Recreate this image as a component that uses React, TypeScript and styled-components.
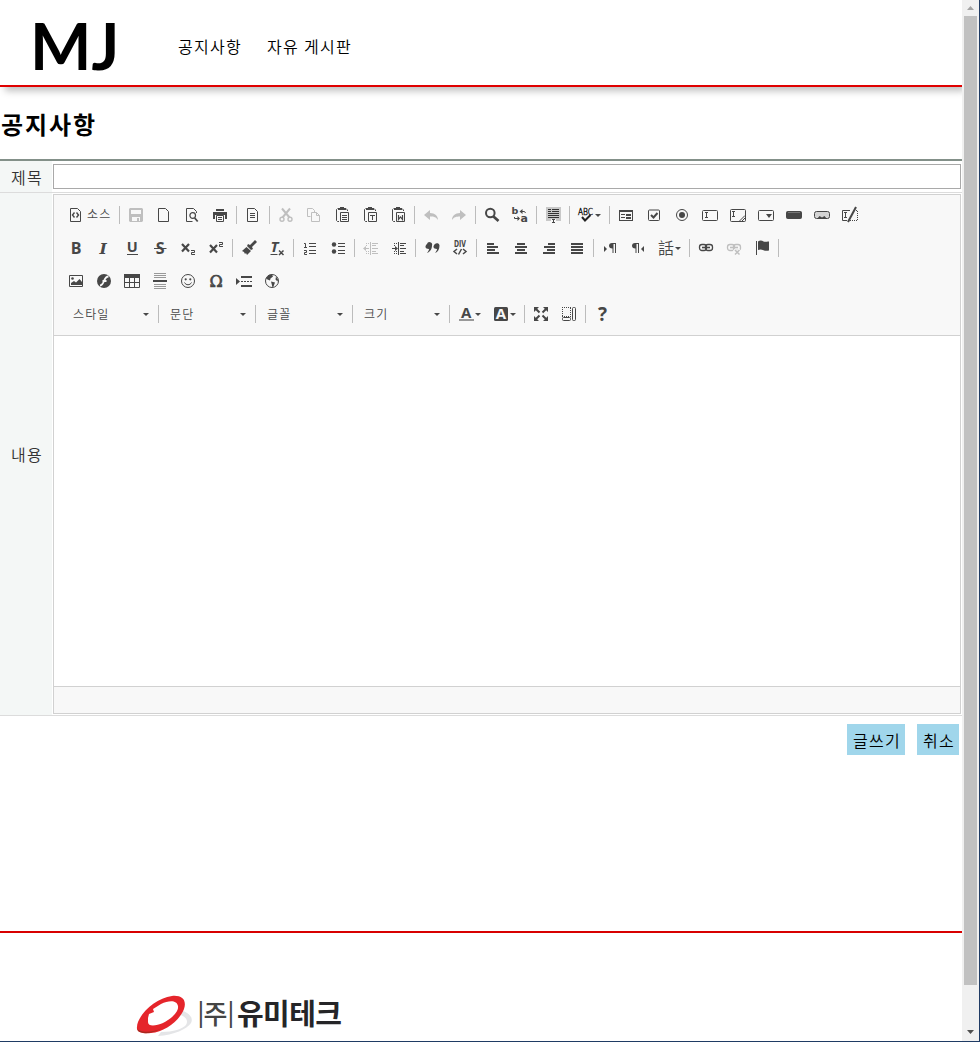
import React from 'react';
import styled, { createGlobalStyle } from 'styled-components';

const INK = '#474747';
const MUTED = '#bfbfbf';

const GlobalStyle = createGlobalStyle`
  * { box-sizing: border-box; }
  body {
    margin: 0;
    background: #fff;
    color: #000;
    font-family: "Noto Sans CJK KR", sans-serif;
    font-size: 16px;
    font-weight: 350;
    overflow: hidden;
  }
`;

const Window = styled.div`
  display: flex;
  width: 980px;
  height: 1042px;
  overflow: hidden;
  border-right: 1px solid #1f3b64;
  border-bottom: 1px solid #1f3b64;
`;

const Page = styled.div`
  width: 962px;
  flex: none;
  overflow: hidden;
`;

const Header = styled.header`
  display: flex;
  align-items: center;
  height: 87px;
  padding: 0 0 0 30px;
  border-bottom: 2px solid #e00000;
  box-shadow: 4px 5px 7px -1px rgba(0, 0, 0, 0.25);
`;

const Brand = styled.div`
  width: 148px;
  font-family: Lato, sans-serif;
  font-size: 65px;
  font-weight: 700;
  line-height: 80px;
  padding-top: 4px;
`;

const Nav = styled.nav`
  display: flex;
  gap: 25px;
  padding-top: 6px;
`;

const NavLink = styled.a`
  line-height: 24px;
  letter-spacing: 1.3px;
`;

const Title = styled.h2`
  margin: 0;
  height: 72px;
  padding: 19px 0 0 1px;
  font-size: 24px;
  font-weight: 700;
  line-height: 36px;
  letter-spacing: 1.9px;
`;

const Form = styled.div`
  border-top: 2px solid #839089;
`;

const FormRow = styled.div<{ $height: number }>`
  display: grid;
  grid-template-columns: 52px 1fr;
  height: ${(p) => p.$height}px;
  border-bottom: 1px solid #dcdcdc;
`;

const Label = styled.label`
  display: flex;
  align-items: center;
  padding: 0 0 0 11px;
  background: #f4f7f6;
  color: #333;
  letter-spacing: 1.3px;
`;

const TitleInput = styled.input`
  height: 25px;
  margin: 3px 1px;
  padding: 1px 4px;
  border: 1px solid #a9a9a9;
  outline: none;
`;

const Editor = styled.div`
  display: flex;
  flex-direction: column;
  margin: 1px;
  border: 1px solid #d1d1d1;
`;

const Toolbar = styled.div`
  height: 141px;
  padding: 4px 8px;
  background: #f8f8f8;
  border-bottom: 1px solid #d1d1d1;
`;

const ToolRow = styled.div`
  display: flex;
  height: 33px;
  padding-top: 7px;
`;

const Tool = styled.span<{ $width?: number }>`
  display: flex;
  width: ${(p) => p.$width ?? 28}px;
  height: 18px;
  padding: 1px 0 0 6px;
  flex: none;
`;

const ToolText = styled.span`
  margin-left: 3px;
  color: #484848;
  font-size: 12px;
  font-weight: 350;
  line-height: 14px;
  letter-spacing: 1.1px;
  white-space: nowrap;
`;

const Divider = styled.span`
  width: 1px;
  height: 18px;
  margin: 0 2px;
  background: #bcbcbc;
  flex: none;
`;

const Combo = styled.span<{ $first?: boolean }>`
  display: flex;
  justify-content: space-between;
  width: ${(p) => (p.$first ? 94 : 92)}px;
  height: 18px;
  padding: 0 7px 0 ${(p) => (p.$first ? 11 : 9)}px;
  color: #484848;
  font-size: 12px;
  font-weight: 350;
  line-height: 18px;
  letter-spacing: 1.1px;
  flex: none;
`;

const Caret = styled.i`
  width: 0;
  height: 0;
  border: 3px solid transparent;
  border-top-color: #484848;
  border-bottom: 0;
  align-self: center;
`;

const Canvas = styled.div`
  flex: 1;
  background: #fff;
`;

const EditorFooter = styled.div`
  height: 27px;
  border-top: 1px solid #d1d1d1;
  background: #f8f8f8;
`;

const Actions = styled.div`
  display: flex;
  justify-content: flex-end;
  gap: 12px;
  height: 215px;
  padding: 8px 3px 0 0;
`;

const ActionButton = styled.button`
  height: 31px;
  padding: 0 4px 0 6px;
  border: 0;
  background: #a0d6eb;
  color: #000;
  font: inherit;
  letter-spacing: 1.3px;
`;

const Footer = styled.footer`
  height: 111px;
  padding: 61px 0 0 134px;
  border-top: 2px solid #d80000;
`;

const ScrollTrack = styled.div`
  display: flex;
  flex-direction: column;
  justify-content: space-between;
  align-items: center;
  width: 17px;
  padding: 6px 1px 7px 1px;
  background: #f0f0f0;
`;

const ScrollThumb = styled.div`
  width: 13px;
  height: 969px;
  margin: 6px 0 auto 0;
  background: #c1c1c1;
`;

const svgText = (
  text: string,
  x: number,
  y: number,
  size: number,
  family: string,
  extra: React.SVGProps<SVGTextElement> = {},
) => (
  <text x={x} y={y} fontSize={size} fontFamily={family} fill="currentColor" stroke="none" {...extra}>
    {text}
  </text>
);

const SANS = '"DejaVu Sans", sans-serif';
const OPEN = '"Open Sans", sans-serif';
const SERIF = '"DejaVu Serif", serif';
const bold = { fontWeight: 700 };

const doc = <path d="M2.5 1.5h7l3 3v10h-10z" />;
const clipboard = (
  <>
    <path d="M3.500 1.500l-1 1v11l1 1H5M12 1.500l1.500 1.500v1" />
    <path className="f" d="M4 1h2V0h4v1h2v2H4z" />
    <path d="M6.500 5.500h8v9h-8z" />
  </>
);
const chain = (
  <>
    <rect x="1.500" y="4.500" width="7" height="6" rx="2.500" strokeWidth="1.300" />
    <rect x="7.500" y="4.500" width="7" height="6" rx="2.500" strokeWidth="1.300" />
    <path d="M4 7.500h8" strokeWidth="1.600" />
  </>
);
const dottedMargin = 'M3 3.500h1M5 3.500h1M3 5.500h1M3 11.500h1M5 11.500h1M3 13.500h1M5 13.500h1';
const pilcrow = 'M13 3v10h-1V4h-1.500v9h-1V8.500C7 8.500 6 7.200 6 5.700S7 3 9 3z';

const icons: Record<string, React.ReactNode> = {
  source: <>{doc}<path d="M6.500 5.500L4.500 8l2 2.500M8.500 5.500l2 2.500-2 2.500" strokeWidth="1.400" /></>,
  save: <path className="f" fillRule="evenodd" d="M1 2l1-1h12l1 1v12l-1 1H2l-1-1zM3 3v4h10V3zM4 10v4h5v-3h2v3h1v-4z" />,
  page: doc,
  preview: <><path d="M12.500 6V4.500l-3-3h-7v13h6" /><circle cx="8.700" cy="8.500" r="2.800" strokeWidth="1.200" /><path d="M10.700 11l3 3.500" strokeWidth="1.800" /></>,
  print: <><path className="f" d="M4 2h8v2H4zM1 5h14v7h-2V8H3v4H1z" /><path d="M4.500 8.500h7v6h-7zM6 10.500h4M6 12.500h4" /></>,
  template: <>{doc}<path d="M5 6.500h5M5 8.500h5M5 10.500h5" /></>,
  cut: <><path d="M4 1.500l7.500 9M12 1.500l-7.500 9" strokeWidth="2" /><circle cx="4" cy="12.300" r="2" strokeWidth="1.400" /><circle cx="12" cy="12.300" r="2" strokeWidth="1.400" /></>,
  copy: <><path d="M4.500 9.500h-3v-8h5l2 2V5" /><path d="M5.500 5.500h5l3 3v6h-8zM10.500 5.500v3h3" /></>,
  paste: <>{clipboard}<path d="M8 8.500h5M8 10.500h5M8 12.500h5" /></>,
  pasteText: <>{clipboard}<path d="M8 8.500h5M10.500 9v4" /></>,
  pasteWord: <>{clipboard}<path d="M8.500 8v4.500l2-2.500 2 2.500V8" strokeWidth="1.200" /></>,
  undo: <path className="f" d="M1 8l6-5v3c5 0 8 3 8 7-2-3-4-3.500-8-3.500V13z" />,
  redo: <path className="f" d="M15 8L9 3v3c-5 0-8 3-8 7 2-3 4-3.500 8-3.500V13z" />,
  find: <><circle cx="6.300" cy="6" r="4.300" strokeWidth="2" /><path d="M9.500 9.500l5 4.500" strokeWidth="2.700" /></>,
  replace: <>{svgText('b', -0.5, 7, 9.5, SANS, bold)}{svgText('a', 8.5, 15, 11, SANS, bold)}<path d="M9 4.500h3.500l1 1.500M2.500 10v1.500h4" /><path className="f" d="M7.500 4.500l3-2.500v5zM8 11.500L5.500 9v5z" /></>,
  selectAll: <><path d="M1 0h15v14h-5v-2H6v2H1z" fill="#c8c8c8" stroke="none" /><path d="M3 2.500h3M3 4.500h3M7 2.500h7M7 4.500h7M3 6.500h11M3 8.500h11M3 10.500h11" stroke="#333" /><path d="M7 12.500h3M8.500 13v2M7 15.500h3" /></>,
  spell: <>{svgText('ABC', 0, 7.5, 9, SANS, { textLength: 15, lengthAdjust: 'spacingAndGlyphs', fill: '#222', stroke: '#222', strokeWidth: 0.45 })}<path d="M4 10l3 3.500L12.500 8" stroke="#222" strokeWidth="2" /></>,
  form: <><rect x="1.500" y="3.500" width="13" height="10" /><path d="M1 4h14" strokeWidth="2" /><path d="M3 7.500h4M3 10.500h4" /><path d="M8 8h5M8 11h5" strokeWidth="2" /></>,
  checkbox: <><rect x="2.500" y="3" width="11" height="10.500" rx="1" /><path d="M5 8l2.500 2.500L11.500 6" strokeWidth="2" /></>,
  radio: <><circle cx="8" cy="8" r="5.500" /><circle className="f" cx="8" cy="8" r="3" /></>,
  textfield: <><rect x=".5" y="3.500" width="15" height="10" rx="1" /><path d="M3 5.500h3M4.500 6v5M3 10.500h3" /></>,
  textarea: <><rect x=".5" y="2.500" width="15" height="12" rx="1" /><path d="M2 4.500h3M3.500 5v5M2 9.500h3M9.500 14l5.500-5.500M12 14l3-3" /></>,
  select: <><rect x=".5" y="3.500" width="15" height="10" rx="1" /><path className="f" d="M8 7h6l-3 4z" /></>,
  button: <><rect x=".5" y="4.500" width="15" height="7" rx="1" fill="currentColor" /><path d="M2 5.500h12" stroke="#777" /></>,
  imageButton: <><rect x=".5" y="4.500" width="15" height="7" rx="2" fill="#d4d4d4" /><path className="f" d="M3 12l2.500-3L8 10.500 10.500 9l2.500 3z" /></>,
  hidden: <><path d="M8 3.500H.5v10H5M2 5.500h3M3.500 6v5M2 10.500h3" /><path d="M14 0L6 15" strokeWidth="2" /><path d="M12 3.500h3.500v10H8" strokeDasharray="1 1" /></>,
  bold: svgText('B', 2.7, 14, 16, OPEN, bold),
  italic: svgText('I', 3.5, 14, 15.5, SERIF, { fontWeight: 700, fontStyle: 'italic' }),
  underline: <>{svgText('U', 2.700, 12, 14.5, OPEN, bold)}<path d="M3 14.500h11" /></>,
  strike: <>{svgText('S', 3.800, 14, 16, OPEN, bold)}<path d="M2 8.500h12.500" /></>,
  sub: <><path d="M2 4l7 7.500M9 4l-7 7.500" strokeWidth="2.200" /><path d="M11 10.500h3.500v2h-3v2H15" /></>,
  sup: <><path d="M2 5l7 7.500M9 5l-7 7.500" strokeWidth="2.200" /><path d="M11 2.500h3.500v2h-3v2H15" /></>,
  brush: <path className="f" d="M14 0l2 2-5 5 1 2-2 1-4-4 1-2 2 1zM5.500 7L10 11l-4 4-1-2-1 1-1-2-2-1z" />,
  removeFormat: <>{svgText('T', 1.5, 12, 15, OPEN, { fontWeight: 700, fontStyle: 'italic' })}<path d="M1.500 14.500h7" /><path d="M10 10.500l4.500 4.500M14.500 10.500L10 15" strokeWidth="1.500" /></>,
  numbered: <><path d="M7 3.500h7M7 6.500h7M7 10.500h7M7 13.500h7" /><path d="M2 3.500h1.500v4M2 7.500h3M2 10.500h2.500v2h-2v2H5" /></>,
  bulleted: <><circle className="f" cx="4" cy="4.500" r="2.200" /><circle className="f" cx="4" cy="11.500" r="2.200" /><path d="M8 3.500h7M8 6.500h7M8 10.500h7M8 13.500h7" /></>,
  outdent: <><path d={`M9 3.500H15M9 5.500H13M9 8.500H15M9 11.500H13M9 13.500H15M7.500 2v13M1 8.500h5${dottedMargin}`} /><path className="f" d="M0 8.500l3-2.500v5z" /></>,
  indent: <><path d={`M9 3.500H15M9 5.500H13M9 8.500H15M9 11.500H13M9 13.500H15M7.500 2v13M1 8.500h5${dottedMargin}`} /><path className="f" d="M7 8.500L4 6v5z" /></>,
  quote: <path className="f" d="M3 4a2.600 2.600 0 0 1 5 1.500C8 9 6 12 3 13c1-1.500 2-2.500 2-4C1 9 .5 6 3 4zM11 4a2.600 2.600 0 0 1 4.500 1.500C15.500 9 14 12 11 13c1-1.500 2-2.500 2-4-4 0-4.500-3-2-5z" />,
  div: <>{svgText('DIV', 2, 7, 8, SANS, { textLength: 12, lengthAdjust: 'spacingAndGlyphs', fontWeight: 700 })}<path d="M5 9l-3 2.500L5 14M11 9l3 2.500-3 2.500M9.500 9l-3 5.500" strokeWidth="1.500" /></>,
  left: <path d="M2 4h7M2 7h11M2 10h8M2 13h12" strokeWidth="2" />,
  center: <path d="M4 4h8M2 7h12M4 10h8M2 13h12" strokeWidth="2" />,
  right: <path d="M7 4h7M3 7h11M6 10h8M2 13h12" strokeWidth="2" />,
  justify: <path d="M2 4h12M2 7h12M2 10h12M2 13h12" strokeWidth="2" />,
  ltr: <><path className="f" d="M2 6l3 3-3 3z" /><path className="f" d={pilcrow} transform="translate(1)" /></>,
  rtl: <><path className="f" d={pilcrow} transform="translate(-4)" /><path className="f" d="M14 6l-3 3 3 3z" /></>,
  language: svgText('話', 0, 13.6, 16, '"Noto Sans CJK TC", sans-serif', { fontWeight: 350 }),
  link: chain,
  unlink: <>{chain}<path d="M8 9.500l6 6M14 9.500l-6 6" stroke="#f8f8f8" strokeWidth="3" /><path d="M9 10l4.500 4.500M13.500 10L9 14.500" strokeWidth="1.500" /></>,
  flag: <><path d="M2.500 1v14" /><path className="f" d="M4 1.500c2-1.500 4-1 5.500 0 2 .8 3 0 5.500 0v9c-2 .5-4 .5-5.500-.2-2-1-3.500-1-5.500-.3z" /></>,
  image: <><path d="M1.500 2.500h13v11h-13z" /><circle className="f" cx="4.500" cy="5.500" r="1.300" /><path className="f" d="M3 12V10l3-2 2 1.500L11.500 6 14 9v3z" /></>,
  flash: <><circle className="f" cx="8" cy="8" r="7" /><path d="M12.500 3.500C7 3.500 9 12 4 12.500M6.500 8h4" stroke="#f8f8f8" strokeWidth="1.800" /></>,
  table: <><path d="M.5 1.500h15v13H.5zM5.500 4v10M10.500 4v10M1 9.500h14" /><path d="M0 3h16" strokeWidth="4" /></>,
  rule: <><path d="M2 .5h12M2 2.500h12M2 4.500h12M2 11.500h12M2 13.500h12M2 15.500h12" stroke="#999" /><path d="M1 8h14" strokeWidth="2" /></>,
  smiley: <><circle cx="8" cy="8" r="6.500" /><circle className="f" cx="5.700" cy="6.300" r="1.100" /><circle className="f" cx="10.300" cy="6.300" r="1.100" /><path d="M4.500 9.500c1.500 3 5.500 3 7 0" /></>,
  omega: svgText('Ω', 1.600, 14, 16, SERIF, { stroke: 'currentColor', strokeWidth: 0.6 }),
  pageBreak: <><path className="f" d="M0 5l4 3.500L0 12z" /><path d="M5 4h11M5 13h11" strokeWidth="2" /><path d="M5 8.500h11" strokeDasharray="2 1" /></>,
  globe: <><circle cx="8" cy="8" r="6.500" /><path className="f" d="M2 5.500L4.500 2 8 1.500 9 3.500 6.500 5.500 6 7.500 3.500 6.500zM7 8.500l4 1-1.500 4-1 1-.7-3zM12 3.500l2 3-.5 2-2-2z" /></>,
  textColor: <>{svgText('A', 3, 11.5, 15, OPEN, bold)}<path d="M1 14h15" stroke="#999" strokeWidth="2" /></>,
  bgColor: <><rect className="f" x="1" y="1" width="14" height="14" rx="1.500" />{svgText('A', 2.7, 13.3, 15, OPEN, { fontWeight: 700, fill: '#f8f8f8' })}</>,
  maximize: <><path d="M3 3l3.500 3.500M13 3L9.500 6.500M3 13l3.500-3.500M13 13L9.500 9.500" strokeWidth="2" /><path className="f" d="M1 1h5L1 6zM15 1v5l-5-5zM1 15v-5l5 5zM15 15h-5l5-5z" /></>,
  blocks: <><path d="M1.500 1v9M1 1.500h9M9.500 2v8M1 10.500h9" strokeDasharray="1 1" /><rect x="1.500" y="11.500" width="8" height="3" rx="1" /><rect x="11.500" y="1.500" width="3" height="13" rx="1" /></>,
  help: svgText('?', 4, 15, 19, OPEN, bold),
};

const Glyph = styled.svg<{ $muted?: boolean }>`
  width: 16px;
  height: 16px;
  flex: none;
  overflow: visible;
  color: ${(p) => (p.$muted ? MUTED : INK)};
  fill: none;
  stroke: currentColor;
  .f { fill: currentColor; stroke: none; }
`;

const disabled = new Set(['save', 'cut', 'copy', 'undo', 'redo', 'outdent', 'unlink']);
const withMenu = new Set(['spell', 'language', 'textColor', 'bgColor']);

const MenuCaret = styled(Caret)`
  margin-left: 1px;
`;

function ToolButton({ name }: { name: string }) {
  const width = name === 'source' ? 55 : withMenu.has(name) ? 35 : 28;
  return (
    <Tool $width={width}>
      <Glyph viewBox="0 0 16 16" $muted={disabled.has(name)}>{icons[name]}</Glyph>
      {name === 'source' && <ToolText>소스</ToolText>}
      {withMenu.has(name) && <MenuCaret />}
    </Tool>
  );
}

const Tools = ({ list }: { list: string }) => (
  <>
    {list.split(' ').map((name, i) => (name === '|' ? <Divider key={i} /> : <ToolButton key={i} name={name} />))}
  </>
);

const toolRows = [
  'source | save page preview print | template | cut copy paste pasteText pasteWord | undo redo | find replace | selectAll | spell | form checkbox radio textfield textarea select button imageButton hidden',
  'bold italic underline strike sub sup | brush removeFormat | numbered bulleted | outdent indent | quote div | left center right justify | ltr rtl language | link unlink flag |',
  'image flash table rule smiley omega pageBreak globe',
];

const combos = ['스타일', '문단', '글꼴', '크기'];

const LogoSvg = styled.svg`
  display: block;
  overflow: visible;
`;

const CompanyLogo = () => (
  <LogoSvg width="220" height="46" viewBox="0 0 220 46">
    <path d="M46 16c8 2 14 7 11 13-4 6-17 12-33 13l3-4c13 0 21-3 25-7 3-5-1-9-8-11z" fill="#e4e5e7" />
    <path
      fill="#e5252b"
      fillRule="evenodd"
      d="M3 33C3 22 21 4 38 2c10-1 15 4 12 13-4 11-19 23-33 24C8 40 2 38 3 33zM14 28c0 5 8 4 15 1 8-4 16-11 15-17-1-6-9-6-17-2l-8 5 1 3-5 2-1 4z"
    />
    <path d="M3 34c2 5 16 5 25 0-8 5-18 7-24 3" fill="#a52a1f" />
    <g fontFamily='"Noto Sans CJK KR", sans-serif' fill="#303033">
      <text x="63.500" y="27" fontSize="24" fontWeight="500" fill="#444">|</text>
      <text x="69.500" y="30" fontSize="26" fontWeight="500" fill="#444">주</text>
      <text x="93.500" y="27" fontSize="24" fontWeight="500" fill="#444">|</text>
      <text x="103" y="31" fontSize="29" fontWeight="700" textLength="105" fill="#252528">유미테크</text>
    </g>
  </LogoSvg>
);

export default function App() {
  return (
    <Window>
      <GlobalStyle />
      <Page>
        <Header>
          <Brand>MJ</Brand>
          <Nav>
            <NavLink>공지사항</NavLink>
            <NavLink>자유 게시판</NavLink>
          </Nav>
        </Header>
        <Title>공지사항</Title>
        <Form>
          <FormRow $height={32}>
            <Label>제목</Label>
            <TitleInput />
          </FormRow>
          <FormRow $height={523}>
            <Label>내용</Label>
            <Editor>
              <Toolbar>
                {toolRows.map((list) => (
                  <ToolRow key={list}><Tools list={list} /></ToolRow>
                ))}
                <ToolRow>
                  {combos.map((name, i) => (
                    <React.Fragment key={name}>
                      <Combo $first={i === 0}>{name}<Caret /></Combo>
                      <Divider />
                    </React.Fragment>
                  ))}
                  <Tools list="textColor bgColor | maximize blocks | help" />
                </ToolRow>
              </Toolbar>
              <Canvas />
              <EditorFooter />
            </Editor>
          </FormRow>
        </Form>
        <Actions>
          <ActionButton>글쓰기</ActionButton>
          <ActionButton>취소</ActionButton>
        </Actions>
        <Footer><CompanyLogo /></Footer>
      </Page>
      <ScrollTrack>
        <svg width="7" height="4"><path d="M0 4h7L3.500 0z" fill="#a3a3a3" /></svg>
        <ScrollThumb />
        <svg width="7" height="4"><path d="M0 0h7L3.500 4z" fill="#505050" /></svg>
      </ScrollTrack>
    </Window>
  );
}
